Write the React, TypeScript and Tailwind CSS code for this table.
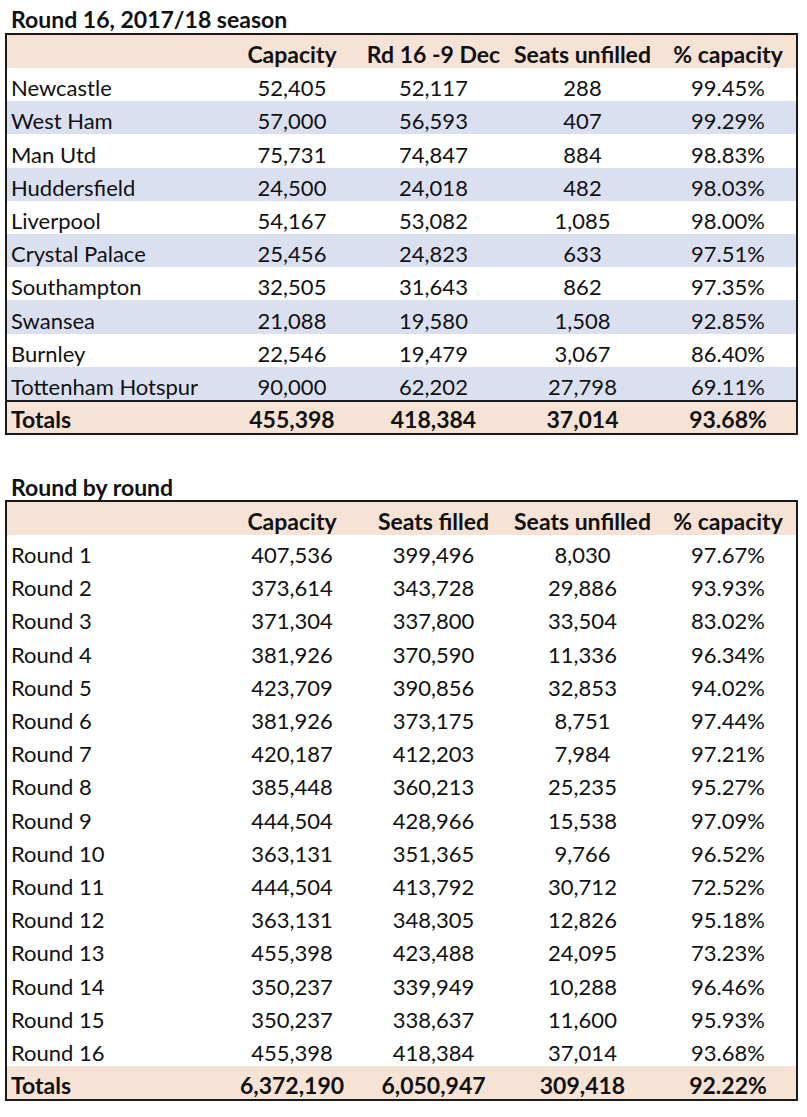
import React from "react";

const t1 = [
  ["Newcastle", "52,405", "52,117", "288", "99.45%"],
  ["West Ham", "57,000", "56,593", "407", "99.29%"],
  ["Man Utd", "75,731", "74,847", "884", "98.83%"],
  ["Huddersfield", "24,500", "24,018", "482", "98.03%"],
  ["Liverpool", "54,167", "53,082", "1,085", "98.00%"],
  ["Crystal Palace", "25,456", "24,823", "633", "97.51%"],
  ["Southampton", "32,505", "31,643", "862", "97.35%"],
  ["Swansea", "21,088", "19,580", "1,508", "92.85%"],
  ["Burnley", "22,546", "19,479", "3,067", "86.40%"],
  ["Tottenham Hotspur", "90,000", "62,202", "27,798", "69.11%"],
];

const t2 = [
  ["Round 1", "407,536", "399,496", "8,030", "97.67%"],
  ["Round 2", "373,614", "343,728", "29,886", "93.93%"],
  ["Round 3", "371,304", "337,800", "33,504", "83.02%"],
  ["Round 4", "381,926", "370,590", "11,336", "96.34%"],
  ["Round 5", "423,709", "390,856", "32,853", "94.02%"],
  ["Round 6", "381,926", "373,175", "8,751", "97.44%"],
  ["Round 7", "420,187", "412,203", "7,984", "97.21%"],
  ["Round 8", "385,448", "360,213", "25,235", "95.27%"],
  ["Round 9", "444,504", "428,966", "15,538", "97.09%"],
  ["Round 10", "363,131", "351,365", "9,766", "96.52%"],
  ["Round 11", "444,504", "413,792", "30,712", "72.52%"],
  ["Round 12", "363,131", "348,305", "12,826", "95.18%"],
  ["Round 13", "455,398", "423,488", "24,095", "73.23%"],
  ["Round 14", "350,237", "339,949", "10,288", "96.46%"],
  ["Round 15", "350,237", "338,637", "11,600", "95.93%"],
  ["Round 16", "455,398", "418,384", "37,014", "93.68%"],
];

const cols = "grid grid-cols-[215px_140px_143px_155px_136px]";

function Row({ cells, className, bold }: { cells: string[]; className: string; bold?: boolean }) {
  return (
    <div className={`${cols} ${className} ${bold ? "font-bold text-[23px]" : "text-[22px]"}`}>
      {cells.map((c, i) => (
        <div
          key={i}
          className={`flex items-end pb-[2px] leading-none whitespace-nowrap ${i === 0 ? "pl-[4px] justify-start" : "justify-center"}`}
        >
          {c}
        </div>
      ))}
    </div>
  );
}

export default function App() {
  return (
    <div
      className="w-[807px] h-[1117px] bg-white text-[#111]"
      style={{ fontFamily: "Lato, 'Open Sans', sans-serif" }}
    >
      <div className="pl-[11px] pt-[8px] h-[33px] font-bold text-[23px] leading-none">Round 16, 2017/18 season</div>
      <div className="ml-[5px] w-[793px] border-2 border-[#1a1a1a]">
        <Row cells={["", "Capacity", "Rd 16 -9 Dec", "Seats unfilled", "% capacity"]} className="h-[33px] bg-[#f6e3d6]" bold />
        {t1.map((r, i) => (
          <Row key={i} cells={r} className={`h-[33.2px] ${i % 2 === 1 ? "bg-[#dbe0f1]" : "bg-white"}`} />
        ))}
        <div className="border-t-2 border-[#1a1a1a]">
          <Row cells={["Totals", "455,398", "418,384", "37,014", "93.68%"]} className="h-[31px] bg-[#f6e3d6]" bold />
        </div>
      </div>
      <div className="pl-[11px] pt-[41px] h-[65px] font-bold text-[23px] leading-none">Round by round</div>
      <div className="ml-[5px] w-[793px] border-2 border-[#1a1a1a]">
        <Row cells={["", "Capacity", "Seats filled", "Seats unfilled", "% capacity"]} className="h-[33px] bg-[#f6e3d6]" bold />
        {t2.map((r, i) => (
          <Row key={i} cells={r} className="h-[33.2px] bg-white" />
        ))}
        <Row cells={["Totals", "6,372,190", "6,050,947", "309,418", "92.22%"]} className="h-[33px] bg-[#f6e3d6]" bold />
      </div>
    </div>
  );
}
